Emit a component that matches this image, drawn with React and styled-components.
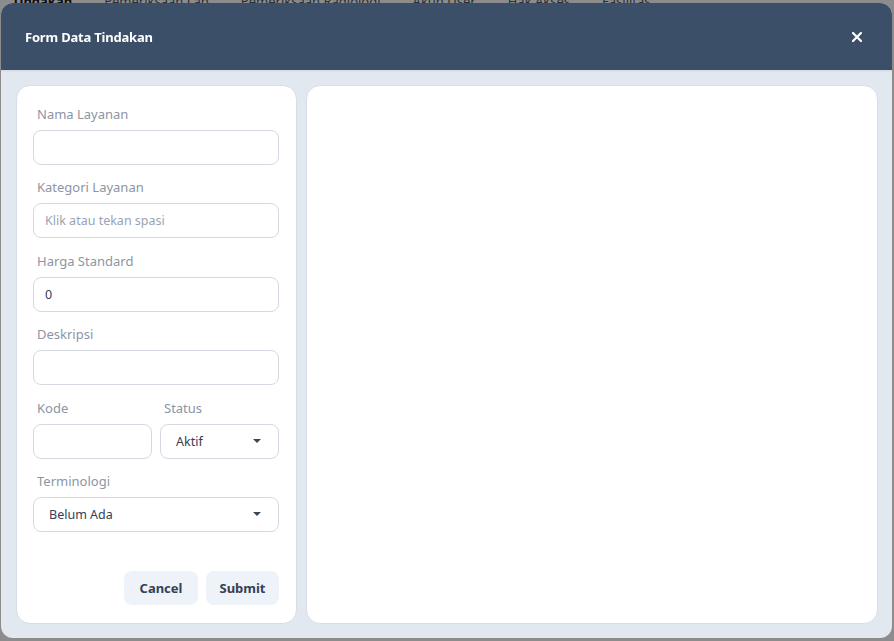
import styled, { createGlobalStyle } from "styled-components"

const GlobalStyle = createGlobalStyle`
    html, body {
        margin: 0;
        padding: 0;
        background: #ffffff;
        font-family: "Noto Sans", "Open Sans", sans-serif;
    }
    * {
        box-sizing: border-box;
    }
`

const Page = styled.div`
    min-height: 100vh;
    padding: 0 12px;
`

const TabBar = styled.div`
    display: flex;
    gap: 32px;
    margin-top: -10px;
    font-size: 13px;
    color: #334155;
`

const Tab = styled.div`
    padding: 2px 0;
    font-weight: ${(p) => (p.active ? 700 : 400)};
    color: ${(p) => (p.active ? "#111827" : "#475569")};
`

const Overlay = styled.div`
    position: fixed;
    inset: 0;
    background: rgba(0, 0, 0, 0.45);
    display: flex;
    align-items: flex-start;
    justify-content: flex-start;
    padding: 3px 0 0 1px;
`

const Modal = styled.div`
    width: 891px;
    height: 635px;
    border-radius: 12px;
    overflow: hidden;
    background: #e2e8f0;
    display: flex;
    flex-direction: column;
`

const Header = styled.div`
    height: 67px;
    flex-shrink: 0;
    background: #3b4f68;
    display: flex;
    align-items: center;
    justify-content: space-between;
    padding: 0 28px 0 24px;
    box-shadow: 0 1px 2px rgba(0, 0, 0, 0.08);
`

const Title = styled.div`
    color: #ffffff;
    font-size: 13px;
    font-weight: 700;
    letter-spacing: -0.2px;
`

const CloseButton = styled.button`
    border: none;
    background: none;
    padding: 0;
    width: 14px;
    height: 14px;
    display: flex;
    cursor: pointer;
`

const Body = styled.div`
    flex: 1;
    display: flex;
    gap: 9px;
    padding: 15px 14px 14px 15px;
    min-height: 0;
`

const Card = styled.div`
    background: #ffffff;
    border: 1px solid #d6dde7;
    border-radius: 14px;
    width: ${(p) => p.width || "auto"};
    flex: ${(p) => (p.grow ? 1 : "none")};
    display: flex;
    flex-direction: column;
`

const Form = styled.div`
    flex: 1;
    display: flex;
    flex-direction: column;
    padding: 19px 17px 18px 16px;
`

const Fields = styled.div`
    display: flex;
    flex-direction: column;
    gap: 13.4px;
`

const Row = styled.div`
    display: grid;
    grid-template-columns: 119px 1fr;
    gap: 8px;
`

const Field = styled.div`
    display: flex;
    flex-direction: column;
    gap: 7px;
`

const Label = styled.div`
    font-size: 13px;
    line-height: 18px;
    color: #8c95a5;
    padding-left: 4px;
`

const Input = styled.div`
    height: 35px;
    border: 1px solid #d4d9e1;
    border-radius: 8px;
    display: flex;
    align-items: center;
    justify-content: space-between;
    padding: 0 ${(p) => (p.select ? "15px" : "11px")};
    font-size: 12.5px;
    color: ${(p) => (p.placeholder ? "#9aa3b2" : "#334155")};
`

const Caret = styled.span`
    width: 0;
    height: 0;
    border-left: 4.5px solid transparent;
    border-right: 4.5px solid transparent;
    border-top: 4.5px solid #3b4656;
    margin-right: 2px;
`

const Actions = styled.div`
    margin-top: auto;
    display: flex;
    justify-content: flex-end;
    gap: 8px;
`

const Button = styled.button`
    height: 34px;
    width: ${(p) => p.w}px;
    border: none;
    border-radius: 8px;
    background: #eef3fa;
    color: #334155;
    font-family: inherit;
    font-size: 13px;
    font-weight: 700;
    cursor: pointer;
`

const tabs = ["Tindakan", "Pemeriksaan Lab", "Pemeriksaan Radiologi", "Akun User", "Hak Akses", "Fasilitas"]

const App = () => {
    return (
        <>
            <GlobalStyle />
            <Page>
                <TabBar>
                    {tabs.map((t, i) => (
                        <Tab key={t} active={i === 0}>
                            {t}
                        </Tab>
                    ))}
                </TabBar>
            </Page>
            <Overlay>
                <Modal>
                    <Header>
                        <Title>Form Data Tindakan</Title>
                        <CloseButton aria-label="close">
                            <svg width="14" height="14" viewBox="0 0 14 14">
                                <path
                                    d="M3 3 L11 11 M11 3 L3 11"
                                    stroke="#ffffff"
                                    strokeWidth="2.2"
                                    strokeLinecap="round"
                                />
                            </svg>
                        </CloseButton>
                    </Header>
                    <Body>
                        <Card width="281px">
                            <Form>
                                <Fields>
                                    <Field>
                                        <Label>Nama Layanan</Label>
                                        <Input />
                                    </Field>
                                    <Field>
                                        <Label>Kategori Layanan</Label>
                                        <Input placeholder>Klik atau tekan spasi</Input>
                                    </Field>
                                    <Field>
                                        <Label>Harga Standard</Label>
                                        <Input>0</Input>
                                    </Field>
                                    <Field>
                                        <Label>Deskripsi</Label>
                                        <Input />
                                    </Field>
                                    <Row>
                                        <Field>
                                            <Label>Kode</Label>
                                            <Input />
                                        </Field>
                                        <Field>
                                            <Label>Status</Label>
                                            <Input select>
                                                Aktif
                                                <Caret />
                                            </Input>
                                        </Field>
                                    </Row>
                                    <Field>
                                        <Label>Terminologi</Label>
                                        <Input select>
                                            Belum Ada
                                            <Caret />
                                        </Input>
                                    </Field>
                                </Fields>
                                <Actions>
                                    <Button w={74}>Cancel</Button>
                                    <Button w={73}>Submit</Button>
                                </Actions>
                            </Form>
                        </Card>
                        <Card grow />
                    </Body>
                </Modal>
            </Overlay>
        </>
    )
}

export default App
